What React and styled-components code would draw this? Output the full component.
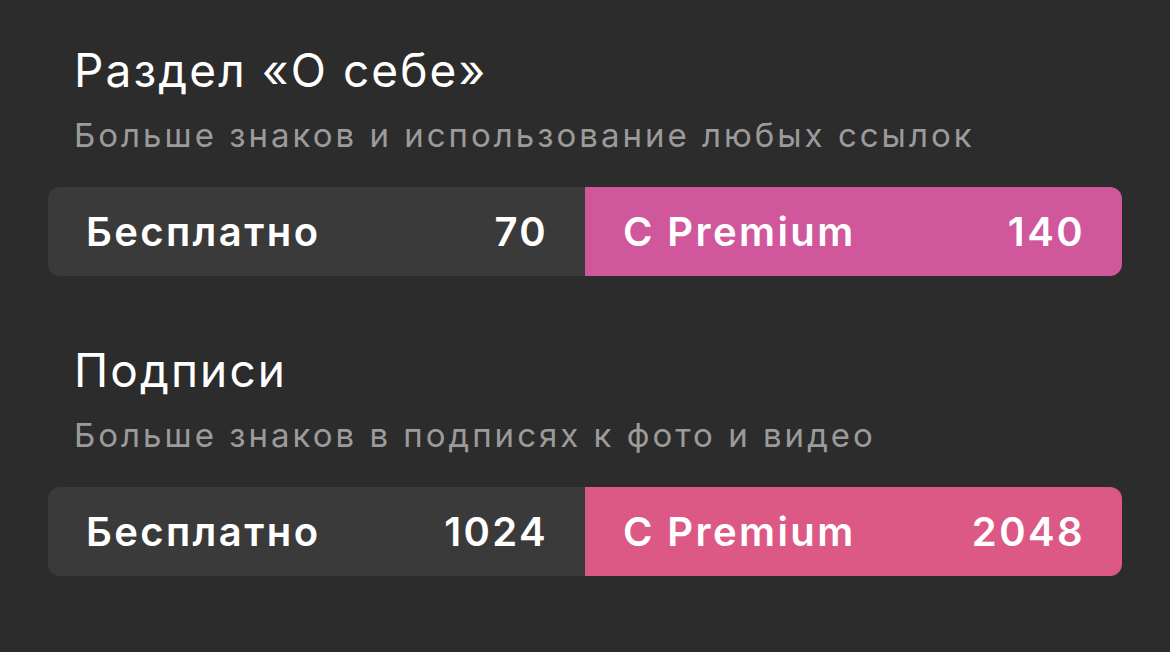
import React from "react";
import styled, { createGlobalStyle } from "styled-components";

const GlobalStyle = createGlobalStyle`
  html, body {
    margin: 0;
    padding: 0;
    background: #2c2c2c;
  }
  body {
    font-family: Inter, "Noto Sans", sans-serif;
    -webkit-font-smoothing: antialiased;
  }
`;

const Page = styled.div`
  width: 1170px;
  height: 652px;
  box-sizing: border-box;
  padding: 42px 48px 0;
  background: #2c2c2c;
  display: flex;
  flex-direction: column;
  gap: 66px;
`;

const Section = styled.section`
  display: flex;
  flex-direction: column;
`;

const Title = styled.h2`
  margin: 0 0 0 26px;
  font-size: 46px;
  line-height: 56px;
  font-weight: 400;
  letter-spacing: 2.1px;
  color: #ffffff;
`;

const Subtitle = styled.p`
  margin: 17px 0 0 26px;
  font-size: 33px;
  line-height: 40px;
  font-weight: 400;
  letter-spacing: 3px;
  color: #9b9b9b;
`;

const Bar = styled.div`
  margin-top: 32px;
  height: 89px;
  display: grid;
  grid-template-columns: 537px 1fr;
  border-radius: 12px;
  overflow: hidden;
`;

const Cell = styled.div`
  display: flex;
  align-items: center;
  justify-content: space-between;
  padding: 0 37px 0 38px;
  background: ${(p) => p.$bg};
  color: #ffffff;
  font-size: 40px;
  font-weight: 600;
  letter-spacing: 2.4px;
`;

const sections = [
  {
    title: "Раздел «О себе»",
    sub: "Больше знаков и использование любых ссылок",
    free: "70",
    premium: "140",
    color: "#d0579b",
  },
  {
    title: "Подписи",
    sub: "Больше знаков в подписях к фото и видео",
    free: "1024",
    premium: "2048",
    color: "#dc5986",
  },
];

export default function App() {
  return (
    <>
      <GlobalStyle />
      <Page>
        {sections.map((s) => (
          <Section key={s.title}>
            <Title>{s.title}</Title>
            <Subtitle>{s.sub}</Subtitle>
            <Bar>
              <Cell $bg="#3a3a3a">
                <span>Бесплатно</span>
                <span>{s.free}</span>
              </Cell>
              <Cell $bg={s.color}>
                <span>С Premium</span>
                <span>{s.premium}</span>
              </Cell>
            </Bar>
          </Section>
        ))}
      </Page>
    </>
  );
}
